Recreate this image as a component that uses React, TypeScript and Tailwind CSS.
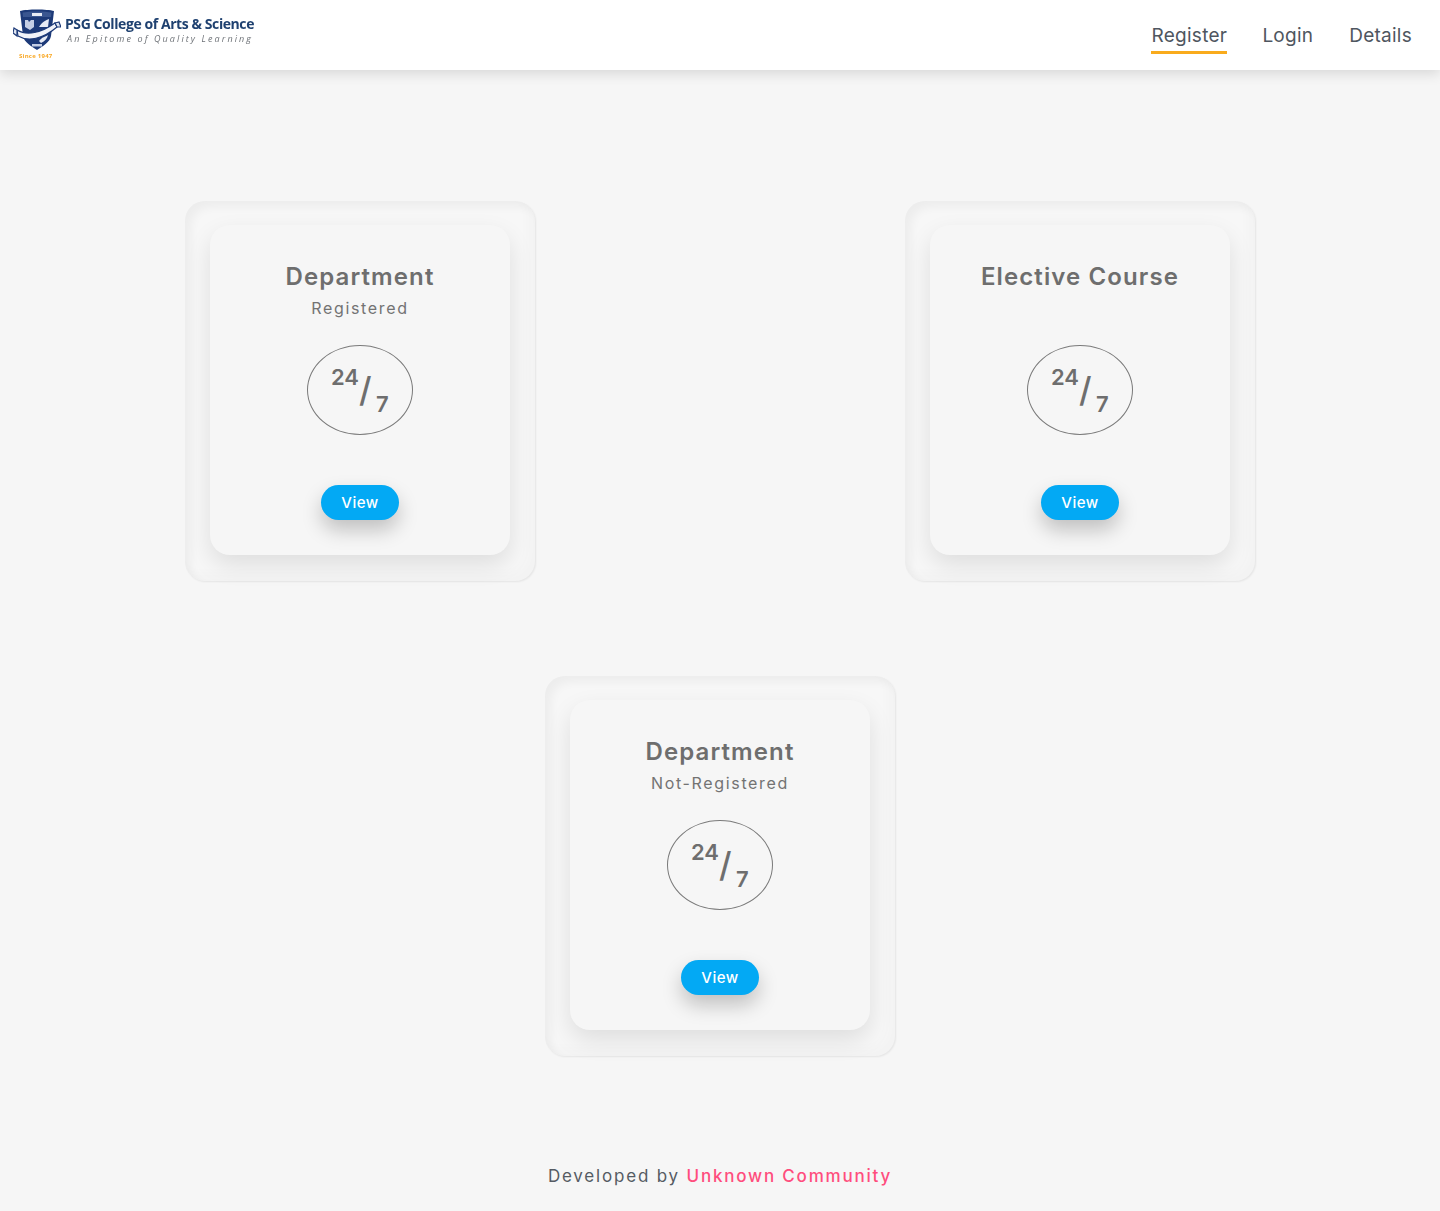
const font = "[font-family:Inter,'Liberation_Sans',sans-serif]";

function Logo() {
  return (
    <div className="flex items-start blur-[0.35px]">
      <svg width="48" height="44" viewBox="0 0 48 44" className="mt-[9px] ml-[13px] shrink-0">
        <path d="M7 2C14 0 34 0 41 2L38 27C37 33 30 37 24 41C18 37 11 33 10 27Z" fill="#1d3a78" />
        <path d="M9.5 3.5C16 2 32 2 38.5 3.5L38 8H10Z" fill="#3a5690" />
        <rect x="19" y="4" width="10" height="3" fill="#e8ecf5" />
        <path d="M12 11h3l1 2 2-2h3v7l-4 3-5-3z" fill="#c4cee4" />
        <path d="M26 18c3-5 7-7 10-8l-1 8z" fill="#e6eaf4" />
        <path d="M4 21c10 6 24 3 38-7l2 4C30 30 15 33 5 27Z" fill="#f1f3f9" stroke="#1d3a78" strokeWidth="1.2" />
        <path d="M4 21l-3-2-1 5 4 3zM42 14l4-1 2 5-4 0z" fill="#dfe5f1" stroke="#1d3a78" strokeWidth="1.2" />
        <path d="M26 32c3-4 6-4 9-6-1 4-3 6-7 8z" fill="#e6eaf4" />
        <rect x="19" y="35" width="10" height="2.5" fill="#c4cee4" />
      </svg>
      <div className="ml-[4px] mt-[15px] w-[200px]">
        <div className="font-['Open_Sans'] text-[14px] leading-[18px] font-bold text-[#1f4170] tracking-[-0.42px] whitespace-nowrap">PSG College of Arts &amp; Science</div>
        <div className="font-['Open_Sans'] text-[9px] leading-[12px] mt-[0px] ml-[2px] italic text-[#6f7378] tracking-[2.1px] whitespace-nowrap">An Epitome of Quality Learning</div>
      </div>
      <div className="absolute left-[19px] top-[52px] font-['Open_Sans'] text-[6px] leading-[8px] font-bold tracking-[0.25px] text-[#f9a825] whitespace-nowrap">Since 1947</div>
    </div>
  );
}

function Card({ title, sub }: { title: string; sub?: string }) {
  return (
    <div className="w-1/2 flex justify-center pb-[95px]">
      <div className="w-[350px] h-[380px] pt-[24px] pl-[25px] rounded-[20px] bg-[#f7f7f7] shadow-[inset_6px_6px_10px_rgba(0,0,0,0.045),inset_-7px_-7px_12px_rgba(0,0,0,0.02),1px_1px_2px_rgba(0,0,0,0.07)]">
        <div className="w-[300px] h-[330px] rounded-[20px] bg-[#f6f6f6] shadow-[0_10px_25px_rgba(0,0,0,0.1)] flex flex-col items-center pt-[36px]">
          <h2 className="text-[24px] leading-[32px] font-semibold text-[#6e6e6e] tracking-[1.1px]">{title}</h2>
          <div className="h-[24px] mt-[3px] text-[16px] leading-[24px] text-[#737373] tracking-[1.65px]">{sub}</div>
          <div className="mt-[25px] w-[106px] h-[90px] rounded-[50%] border border-[#7a7a7a] relative text-[#6e6e6e] font-semibold">
            <span className="absolute left-[23px] top-[17px] text-[22px] leading-[28px]">24</span>
            <span className="absolute left-[51px] top-[24px] text-[34px] leading-[40px] font-medium">/</span>
            <span className="absolute left-[68px] top-[44px] text-[22px] leading-[28px]">7</span>
          </div>
          <button className="mt-[50px] w-[78px] h-[35px] pt-[1px] rounded-full bg-[#03a9f4] text-white text-[15px] font-medium tracking-[0.5px] shadow-[0_10px_20px_rgba(0,0,0,0.22)]">View</button>
        </div>
      </div>
    </div>
  );
}

export default function App() {
  return (
    <div className={`${font} relative min-h-[1211px] bg-[#f6f6f6]`}>
      <header className="h-[70px] bg-white shadow-[0_4px_12px_rgba(0,0,0,0.12)] flex justify-between items-start relative z-10">
        <Logo />
        <nav className="flex pr-[28px] pt-[23px] text-[19px] leading-[26px] text-[#4f5660] tracking-[0.25px]">
          <a className="w-[76px] h-[31px] mr-[35px] text-center border-b-[3px] border-[#f9ab1d]">Register</a>
          <a className="mr-[36px]">Login</a>
          <a>Details</a>
        </nav>
      </header>
      <main className="flex flex-wrap justify-center pt-[131px]">
        <Card title="Department" sub="Registered" />
        <Card title="Elective Course" />
        <Card title="Department" sub="Not-Registered" />
      </main>
      <footer className="mt-[13px] text-center text-[17px] leading-[24px] tracking-[1.8px] text-[#555b63]">
        Developed by <span className="text-[#ff4d7d] font-medium">Unknown Community</span>
      </footer>
    </div>
  );
}
